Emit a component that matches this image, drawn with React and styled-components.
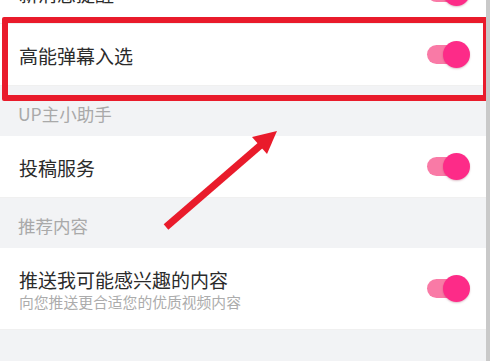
import React from "react";
import styled, { createGlobalStyle } from "styled-components";

const GlobalStyle = createGlobalStyle`
  html, body {
    margin: 0;
    padding: 0;
    background: #ffffff;
    font-family: "Noto Sans CJK SC", "Noto Sans", sans-serif;
  }
`;

const settings = [
  { type: "row", title: "新消息提醒", on: true },
  { type: "row", title: "高能弹幕入选", on: true },
  { type: "section", title: "UP主小助手" },
  { type: "row", title: "投稿服务", on: true },
  { type: "section", title: "推荐内容" },
  {
    type: "row",
    title: "推送我可能感兴趣的内容",
    desc: "向您推送更合适您的优质视频内容",
    on: true,
  },
];

const App = () => {
  return (
    <>
      <GlobalStyle />
      <Screen>
        <Content>
          <List>
            {settings.map((item, i) =>
              item.type === "section" ? (
                <SectionHeader key={i}>{item.title}</SectionHeader>
              ) : (
                <Row key={i} $tall={!!item.desc}>
                  <TextBlock $tall={!!item.desc}>
                    <Title>{item.title}</Title>
                    {item.desc && <Desc>{item.desc}</Desc>}
                  </TextBlock>
                  <Toggle $on={item.on}>
                    <Knob />
                  </Toggle>
                </Row>
              )
            )}
            <Filler />
          </List>

          <HighlightBox />
          <Arrow viewBox="0 0 486 361">
            <line
              x1="166"
              y1="227"
              x2="262"
              y2="144"
              stroke="#e91b2b"
              strokeWidth="7"
            />
            <polygon points="277,131 252,137 267,154" fill="#e91b2b" />
          </Arrow>
        </Content>
        <ScrollTrack />
        <EdgeGap />
      </Screen>
    </>
  );
};

const Screen = styled.div`
  width: 493px;
  height: 361px;
  display: flex;
  overflow: hidden;
  background: #ffffff;
`;

const Content = styled.div`
  position: relative;
  width: 486px;
  height: 361px;
  overflow: hidden;
  background: #f2f3f5;
`;

// list is scrolled a little, the first row is only half visible
const List = styled.div`
  display: flex;
  flex-direction: column;
  margin-top: -38px;
`;

const Row = styled.div`
  height: ${(p) => (p.$tall ? "82px" : "62px")};
  box-sizing: border-box;
  display: flex;
  align-items: center;
  justify-content: space-between;
  padding: 0 16px 0 19px;
  background: #ffffff;
  border-bottom: 1px solid #f0f0f0;
`;

const TextBlock = styled.div`
  display: flex;
  flex-direction: column;
  padding-top: ${(p) => (p.$tall ? "5px" : "2px")};
`;

const Title = styled.div`
  font-size: 19px;
  line-height: 22px;
  color: #2b2b2b;
`;

const Desc = styled.div`
  font-size: 14.8px;
  line-height: 22px;
  color: #acacac;
`;

const SectionHeader = styled.div`
  height: 50px;
  box-sizing: border-box;
  padding: 17px 0 0 18px;
  font-size: 17.5px;
  line-height: 22px;
  color: #a9a9a9;
  background: #f2f3f5;
`;

const Filler = styled.div`
  height: 40px;
  background: #f2f3f5;
`;

const Toggle = styled.div`
  position: relative;
  width: 43px;
  height: 27px;
  display: flex;
  align-items: center;
  justify-content: ${(p) => (p.$on ? "flex-end" : "flex-start")};
  flex-shrink: 0;

  &::before {
    content: "";
    position: absolute;
    left: 0;
    right: 4px;
    top: 4px;
    height: 19px;
    border-radius: 10px;
    background: ${(p) => (p.$on ? "#f97aa6" : "#d8d8d8")};
  }
`;

const Knob = styled.div`
  position: relative;
  width: 27px;
  height: 27px;
  border-radius: 50%;
  background: #fd2b88;
  box-shadow: 0 1px 2px rgba(120, 0, 40, 0.25);
`;

const HighlightBox = styled.div`
  position: absolute;
  left: 2px;
  top: 17px;
  width: 487px;
  height: 84px;
  box-sizing: border-box;
  border: 6px solid #e91b2b;
  border-radius: 2px;
  pointer-events: none;
`;

const Arrow = styled.svg`
  position: absolute;
  left: 0;
  top: 0;
  width: 486px;
  height: 361px;
  pointer-events: none;
`;

const ScrollTrack = styled.div`
  width: 4px;
  height: 361px;
  background: #c9c9c9;
`;

const EdgeGap = styled.div`
  width: 3px;
  height: 361px;
  background: #ffffff;
`;

export default App;
